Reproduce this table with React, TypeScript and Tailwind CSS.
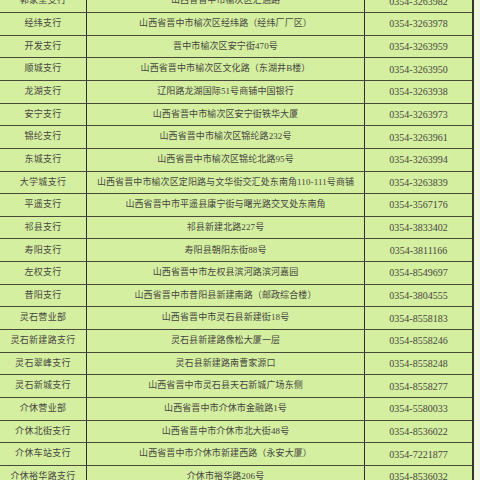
import React from 'react';

const rows: [string, string, string][] = [
  ['郭家堡支行', '山西省晋中市榆次区汇通路', '0354-3263982'],
  ['经纬支行', '山西省晋中市榆次区经纬路（经纬厂厂区）', '0354-3263978'],
  ['开发支行', '晋中市榆次区安宁街470号', '0354-3263959'],
  ['顺城支行', '山西省晋中市榆次区文化路（东湖井B楼）', '0354-3263950'],
  ['龙湖支行', '辽阳路龙湖国际51号商铺中国银行', '0354-3263938'],
  ['安宁支行', '山西省晋中市榆次区安宁街铁华大厦', '0354-3263973'],
  ['锦纶支行', '山西省晋中市榆次区锦纶路232号', '0354-3263961'],
  ['东城支行', '山西省晋中市榆次区锦纶北路95号', '0354-3263994'],
  ['大学城支行', '山西省晋中市榆次区定阳路与文华街交汇处东南角110-111号商铺', '0354-3263839'],
  ['平遥支行', '山西省晋中市平遥县康宁街与曙光路交叉处东南角', '0354-3567176'],
  ['祁县支行', '祁县新建北路227号', '0354-3833402'],
  ['寿阳支行', '寿阳县朝阳东街88号', '0354-3811166'],
  ['左权支行', '山西省晋中市左权县滨河路滨河嘉园', '0354-8549697'],
  ['昔阳支行', '山西省晋中市昔阳县新建南路（邮政综合楼）', '0354-3804555'],
  ['灵石营业部', '山西省晋中市灵石县新建街18号', '0354-8558183'],
  ['灵石新建路支行', '灵石县新建路像松大厦一层', '0354-8558246'],
  ['灵石翠峰支行', '灵石县新建路南曹家源口', '0354-8558248'],
  ['灵石新城支行', '山西省晋中市灵石县天石新城广场东侧', '0354-8558277'],
  ['介休营业部', '山西省晋中市介休市金融路1号', '0354-5580033'],
  ['介休北街支行', '山西省晋中市介休市北大街48号', '0354-8536022'],
  ['介休车站支行', '山西省晋中市介休市新建西路（永安大厦）', '0354-7221877'],
  ['介休裕华路支行', '介休市裕华路206号', '0354-8536032'],
];

const App = () => {
  return (
    <div className="w-[480px] h-[480px] overflow-hidden bg-[#eef6e2] font-['Liberation_Serif','Noto_Sans_CJK_SC',serif] text-[#454540]">
      <div className="w-[474px] -mt-[9.6px] bg-[#d5efa0] border-r-2 border-[#35352c]">
        {rows.map(([name, addr, phone]) => (
          <div key={name} className="flex h-[22.65px] border-b border-[#4a4a3c]">
            <div className="w-[86px] shrink-0 flex items-center justify-center text-[9px] tracking-[0.3px] whitespace-nowrap">
              {name}
            </div>
            <div className="w-[279px] shrink-0 flex items-center justify-center border-l-[1.5px] border-r-[1.5px] border-[#30302a] text-[9px] tracking-[0.1px] whitespace-nowrap">
              {addr}
            </div>
            <div className="flex-1 flex items-center justify-center text-[10px]">
              {phone}
            </div>
          </div>
        ))}
      </div>
    </div>
  );
};

export default App;
